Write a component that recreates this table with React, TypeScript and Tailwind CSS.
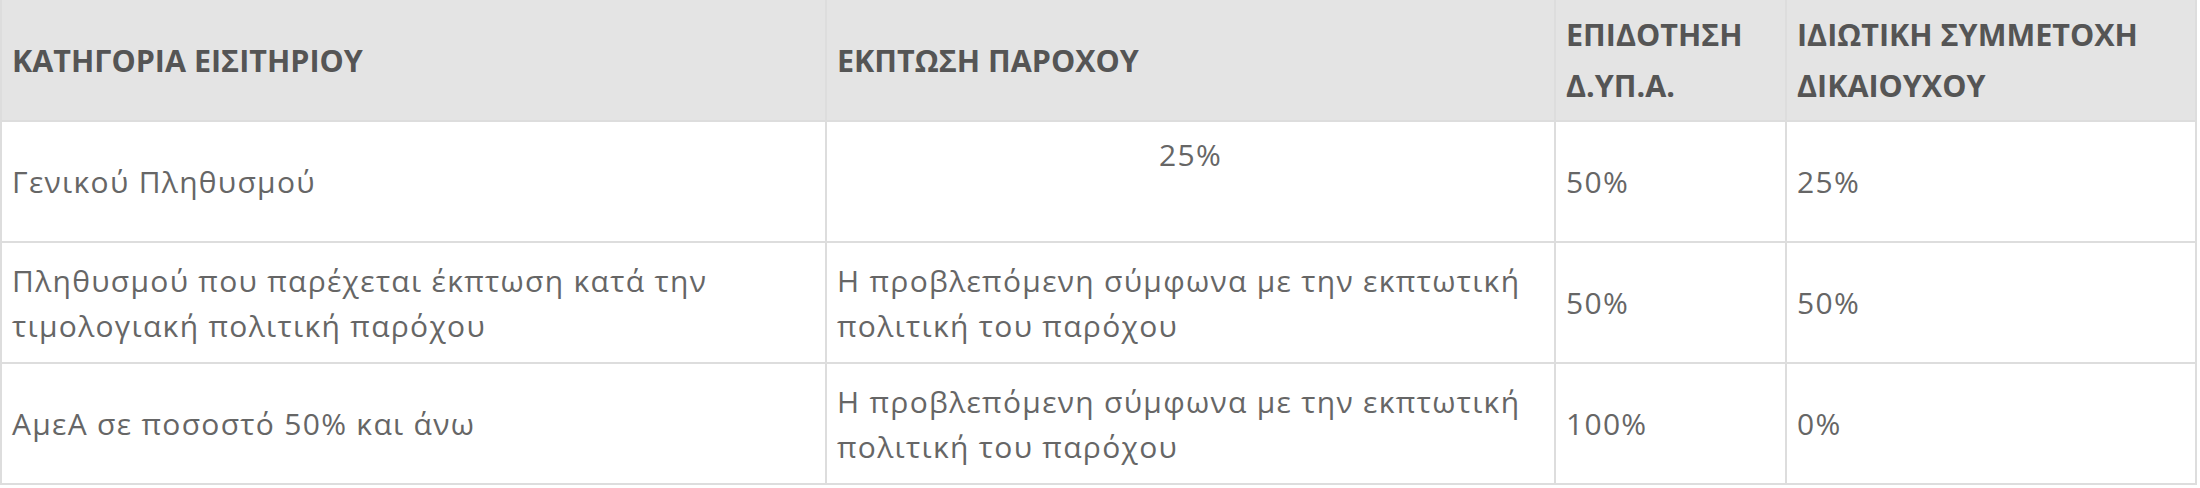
import React from 'react';

const rows = [
  {
    category: 'Γενικού Πληθυσμού',
    discount: '25%',
    subsidy: '50%',
    share: '25%',
  },
  {
    category: 'Πληθυσμού που παρέχεται έκπτωση κατά την τιμολογιακή πολιτική παρόχου',
    discount: 'Η προβλεπόμενη σύμφωνα με την εκπτωτική πολιτική του παρόχου',
    subsidy: '50%',
    share: '50%',
  },
  {
    category: 'ΑμεΑ σε ποσοστό 50% και άνω',
    discount: 'Η προβλεπόμενη σύμφωνα με την εκπτωτική πολιτική του παρόχου',
    subsidy: '100%',
    share: '0%',
  },
];

const th =
  'border-2 border-t-0 border-[#dddddd] px-[10px] py-[9px] text-left align-middle text-[30.5px] leading-[51px] font-bold text-[#555555]';
const td =
  'border-2 border-[#dddddd] px-[10px] py-[13px] align-middle text-[30px] leading-[45px] tracking-[1.3px] text-[#666666]';

export default function App() {
  return (
    <div className="min-h-screen bg-white" style={{ fontFamily: '"Open Sans", "Noto Sans", sans-serif' }}>
      <table className="w-[2197px] border-collapse table-fixed">
        <colgroup>
          <col className="w-[825px]" />
          <col className="w-[729px]" />
          <col className="w-[231px]" />
          <col />
        </colgroup>
        <thead>
          <tr className="bg-[#e4e4e4] h-[121px]">
            <th className={th}>ΚΑΤΗΓΟΡΙΑ ΕΙΣΙΤΗΡΙΟΥ</th>
            <th className={th}>ΕΚΠΤΩΣΗ ΠΑΡΟΧΟΥ</th>
            <th className={th}>ΕΠΙΔΟΤΗΣΗ Δ.ΥΠ.Α.</th>
            <th className={th}>ΙΔΙΩΤΙΚΗ ΣΥΜΜΕΤΟΧΗ ΔΙΚΑΙΟΥΧΟΥ</th>
          </tr>
        </thead>
        <tbody>
          {rows.map((r, i) => (
            <tr key={i} className="h-[121px]">
              <td className={td}>{r.category}</td>
              {i === 0 ? (
                <td className="border-2 border-[#dddddd] px-[10px] py-[10px] align-middle text-[30px] leading-[45px] tracking-[1.3px] text-[#666666]">
                  <p className="text-center mb-[54px]">{r.discount}</p>
                </td>
              ) : (
                <td className={td}>{r.discount}</td>
              )}
              <td className={td}>{r.subsidy}</td>
              <td className={td}>{r.share}</td>
            </tr>
          ))}
        </tbody>
      </table>
    </div>
  );
}
